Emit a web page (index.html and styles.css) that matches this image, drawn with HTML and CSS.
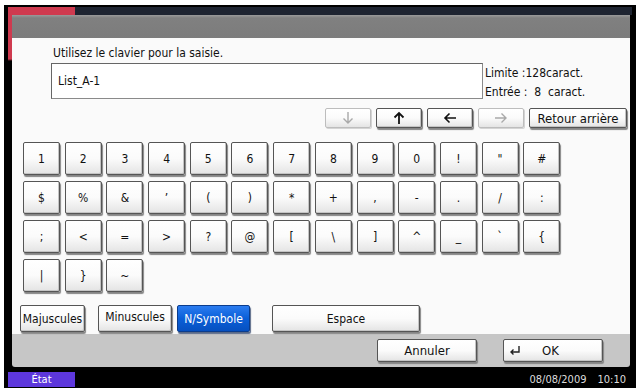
FILE: index.html
```
<!DOCTYPE html>
<html>
<head>
    <title>Clavier</title>
    <link rel="stylesheet" href="styles.css">
</head>
<body>
    <div class="frame">
        <div class="topbar">
            <div class="topbar-red"></div>
            <div class="topbar-dark"></div>
        </div>

        <div class="main">
            <div class="edge"></div>
            <div class="window">
                <div class="title"></div>

                <div class="content">
                    <div class="prompt">Utilisez le clavier pour la saisie.</div>

                    <div class="input-row">
                        <div class="input-box">List_A-1</div>
                        <div class="info">
                            <div>Limite :128caract.</div>
                            <div>Entrée :&nbsp; 8&nbsp; caract.</div>
                        </div>
                    </div>

                    <div class="cursor-row">
                        <button class="btn arrow-btn disabled">
                            <svg width="12" height="14" viewBox="0 0 12 14"><path d="M6 1v11M1.5 7.5L6 12l4.5-4.5" fill="none" stroke="currentColor" stroke-width="1.4"/></svg>
                        </button>
                        <button class="btn arrow-btn">
                            <svg width="12" height="14" viewBox="0 0 12 14"><path d="M6 13V2M1.5 6.5L6 2l4.5 4.5" fill="none" stroke="currentColor" stroke-width="1.8"/></svg>
                        </button>
                        <button class="btn arrow-btn">
                            <svg width="14" height="12" viewBox="0 0 14 12"><path d="M13 6H2M6.5 1.5L2 6l4.5 4.5" fill="none" stroke="currentColor" stroke-width="1.6"/></svg>
                        </button>
                        <button class="btn arrow-btn disabled">
                            <svg width="14" height="12" viewBox="0 0 14 12"><path d="M1 6h11M7.5 1.5L12 6l-4.5 4.5" fill="none" stroke="currentColor" stroke-width="1.4"/></svg>
                        </button>
                        <button class="btn back-btn">Retour arrière</button>
                    </div>

                    <div class="keys" id="keys"></div>

                    <div class="mode-row">
                        <button class="btn mode-btn majuscules">Majuscules</button>
                        <button class="btn mode-btn minuscules">Minuscules</button>
                        <button class="btn mode-btn symbole active">N/Symbole</button>
                        <button class="btn mode-btn espace">Espace</button>
                    </div>
                </div>

                <div class="footer">
                    <button class="btn foot-btn">Annuler</button>
                    <button class="btn foot-btn ok-btn">
                        <svg class="enter-icon" width="12" height="11" viewBox="0 0 12 11"><path d="M10 1v6H2M4.5 4.5L2 7l2.5 2.5" fill="none" stroke="currentColor" stroke-width="1.4"/></svg>
                        <span>OK</span>
                    </button>
                </div>
            </div>
        </div>

        <div class="status">
            <div class="etat">État</div>
            <div class="clock">
                <span>08/08/2009</span>
                <span>10:10</span>
            </div>
        </div>
    </div>

    <script>
        const keys = [
            '1', '2', '3', '4', '5', '6', '7', '8', '9', '0', '!', '"', '#',
            '$', '%', '&', '\u2019', '(', ')', '*', '+', ',', '-', '.', '/', ':',
            ';', '<', '=', '>', '?', '@', '[', '\\', ']', '^', '_', '`', '{',
            '|', '}', '~'
        ];

        const grid = document.getElementById('keys');
        keys.forEach(k => {
            const key = document.createElement('button');
            key.className = 'btn key';
            key.textContent = k;
            grid.appendChild(key);
        });
    </script>
</body>
</html>
```

FILE: styles.css
```
* {
    margin: 0;
    padding: 0;
    box-sizing: border-box;
}

body {
    font-family: "DejaVu Sans Condensed", "DejaVu Sans", sans-serif;
    font-size: 12px;
    color: #111;
    background: #fff;
}

.frame {
    width: 632px;
    height: 383px;
    margin: 5px 0 0 4px;
    padding: 2px 4px 0 4px;
    background: #000;
}

.topbar {
    display: flex;
    height: 8px;
}

.topbar-red {
    width: 67px;
    background: #cf3a4f;
}

.topbar-dark {
    flex: 1;
    background: #1e2431;
}

.main {
    display: flex;
}

.edge {
    width: 4px;
    background: linear-gradient(#cf3a4f 0, #cf3a4f 44px, #000 46px);
}

.window {
    width: 618px;
}

.title {
    height: 23px;
    background: linear-gradient(#9a9a9a, #808080 3px, #7c7c7c);
}

.content {
    height: 296px;
    padding: 8px 3px 0 8px;
    background: #fafafa;
}

.prompt {
    margin-left: 33px;
    line-height: 14px;
}

.input-row {
    display: flex;
    margin-top: 3px;
}

.input-box {
    width: 432px;
    height: 36px;
    margin-left: 31px;
    padding-left: 6px;
    line-height: 34px;
    background: #fff;
    border: 1px solid #8a8a8a;
    border-top-color: #666;
    border-left-color: #666;
}

.info {
    margin-left: 2px;
    padding-top: 1px;
    line-height: 19px;
}

.btn {
    font-family: inherit;
    font-size: 12px;
    color: #111;
    background: linear-gradient(#ffffff, #fbfbfb 50%, #e4e4e4);
    border: 1px solid #555;
    border-radius: 2px;
    box-shadow: 1px 2px 1px #858585, inset -1px -1px 0 #c4c4c4;
    display: flex;
    align-items: center;
    justify-content: center;
}

.cursor-row {
    display: flex;
    justify-content: flex-end;
    gap: 5px;
    margin-top: 6px;
    height: 20px;
}

.arrow-btn {
    width: 46px;
    height: 20px;
}

.arrow-btn.disabled {
    color: #a9a9a9;
    border-color: #bdbdbd;
    box-shadow: 1px 1px 0 #d4d4d4;
}

.back-btn {
    width: 98px;
    height: 20px;
    font-size: 13px;
}

.keys {
    display: grid;
    grid-template-columns: repeat(13, 37px);
    grid-auto-rows: 34px;
    column-gap: 4.7px;
    row-gap: 5px;
    margin: 14px 0 0 3px;
}

.key {
    width: 37px;
    height: 33px;
}

.mode-row {
    display: flex;
    margin-top: 12px;
}

.mode-btn {
    height: 27px;
    font-size: 12px;
}

.majuscules {
    width: 65px;
}

.minuscules {
    width: 74px;
    margin-left: 13px;
    padding-bottom: 3px;
}

.symbole {
    width: 73px;
    margin-left: 5px;
}

.espace {
    width: 148px;
    margin-left: 22px;
}

.active {
    color: #fff;
    background: linear-gradient(#2b7cf0, #0a5fd8 50%, #0650c0);
    border-color: #0b3c8c;
    box-shadow: 1px 2px 1px #5a6a88;
}

.footer {
    display: flex;
    justify-content: flex-end;
    gap: 26px;
    height: 33px;
    padding: 5px 27px 0 0;
    background: #c6c6c6;
    border-radius: 0 0 3px 3px;
}

.foot-btn {
    width: 100px;
    height: 23px;
    font-size: 13px;
}

.ok-btn {
    justify-content: flex-start;
    padding-left: 5px;
}

.ok-btn span {
    margin-left: 21px;
}

.enter-icon {
    color: #222;
}

.status {
    display: flex;
    justify-content: space-between;
    align-items: center;
    height: 15px;
    margin-top: 5px;
}

.etat {
    width: 67px;
    height: 15px;
    line-height: 15px;
    text-align: center;
    color: #fff;
    font-size: 11px;
    background: #5d37dc;
}

.clock {
    display: flex;
    gap: 11px;
    padding-right: 6px;
    color: #ddd;
    font-size: 11px;
}
```
